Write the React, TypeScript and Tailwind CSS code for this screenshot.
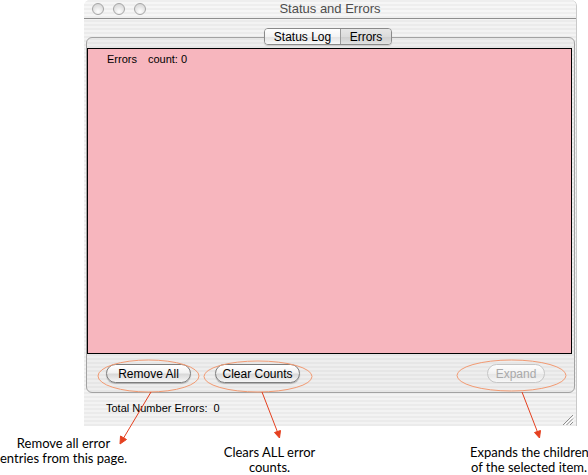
import React from 'react';

const stripes =
  'bg-[repeating-linear-gradient(180deg,#ebebeb_0px,#ebebeb_2px,#f3f3f3_2px,#f3f3f3_4px)]';

function AquaButton({ label, width, disabled }: { label: string; width: string; disabled?: boolean }) {
  return (
    <div
      className={`${width} h-[19px] rounded-full flex items-center justify-center text-[12px] leading-none ${
        disabled
          ? 'border border-[#c6c6c6] text-[#a9a9a9] bg-[linear-gradient(180deg,#fdfdfd_0%,#f1f1f1_50%,#e6e6e6_55%,#f7f7f7_100%)]'
          : 'border border-[#7d7d7d] text-black bg-[linear-gradient(180deg,#ffffff_0%,#f2f2f2_45%,#d9d9d9_55%,#f6f6f6_100%)] shadow-[0_1px_1px_rgba(0,0,0,0.25)]'
      }`}
    >
      {label}
    </div>
  );
}

export default function App() {
  return (
    <div className="relative w-[588px] h-[475px] bg-white overflow-hidden font-['Liberation_Sans',Arial,sans-serif]">
      {/* Window */}
      <div className={`ml-[84px] w-[492px] h-[426px] flex flex-col rounded-t-[6px] ${stripes} shadow-[1px_0_0_#c9c9c9]`}>
        {/* Title bar */}
        <div className="relative h-[22px] flex items-center border-b border-[#8e8e8e] rounded-t-[6px] bg-[repeating-linear-gradient(180deg,#eeeeee_0px,#eeeeee_2px,#f6f6f6_2px,#f6f6f6_4px)]">
          <div className="flex items-center gap-[9px] pl-[8px]">
            {[0, 1, 2].map((i) => (
              <div
                key={i}
                className="w-[12px] h-[12px] rounded-full border border-[#a5a5a5] bg-[radial-gradient(circle_at_50%_75%,#ffffff_0%,#e9e9e9_45%,#cfcfcf_100%)]"
              />
            ))}
          </div>
          <div className="absolute inset-0 flex items-center justify-center text-[13px] text-[#4d4d4d]">
            Status and Errors
          </div>
        </div>

        {/* Tabs */}
        <div className="relative z-10 mt-[9px] h-[17px] flex justify-center pr-[4px]">
          <div className="flex h-[17px] rounded-[4px] border border-[#8a8a8a] overflow-hidden text-[12px] leading-none shadow-[0_1px_1px_rgba(0,0,0,0.15)]">
            <div className="w-[76px] flex items-center justify-center bg-[linear-gradient(180deg,#ffffff_0%,#f4f4f4_50%,#e4e4e4_55%,#f8f8f8_100%)] border-r border-[#9a9a9a]">
              Status Log
            </div>
            <div className="w-[50px] flex items-center justify-center bg-[linear-gradient(180deg,#e6e6e6_0%,#dcdcdc_50%,#cfcfcf_55%,#e2e2e2_100%)]">
              Errors
            </div>
          </div>
        </div>

        {/* Tab box */}
        <div className="-mt-[8px] ml-[2px] mr-[1px] rounded-[6px] border border-[#a2a2a2] bg-[repeating-linear-gradient(180deg,#e6e6e6_0px,#e6e6e6_2px,#eeeeee_2px,#eeeeee_4px)] pt-[10px] pr-[2px]">
          <div className="h-[306px] border border-black bg-[#f7b6be] pl-[19px] pt-[4px] text-[11px] leading-[13px] text-black">
            <span>Errors</span>
            <span className="ml-[11px]">count: 0</span>
          </div>
          <div className="flex items-center mt-[10px] mb-[9px] pl-[19px] pr-[27px]">
            <AquaButton label="Remove All" width="w-[85px]" />
            <div className="ml-[24px]">
              <AquaButton label="Clear Counts" width="w-[85px]" />
            </div>
            <div className="ml-auto">
              <AquaButton label="Expand" width="w-[58px]" disabled />
            </div>
          </div>
        </div>

        {/* Status line */}
        <div className="mt-[9px] pl-[22px] text-[11px] leading-[13px] text-black whitespace-pre">
          Total Number Errors:  0
        </div>
        <div className="mt-auto flex justify-end pr-[2px] pb-[1px]">
          <svg width="11" height="10" viewBox="0 0 11 10">
            <path d="M10 0 L0 10 M10 3.5 L3.5 10 M10 7 L7 10" stroke="#8c8c8c" strokeWidth="1" />
            <path d="M11 1 L1 11 M11 4.5 L4.5 11" stroke="#ffffff" strokeWidth="1" />
          </svg>
        </div>
      </div>

      {/* Annotation captions */}
      <div className="flex items-start font-['Lato',sans-serif] text-[13px] leading-[15px] text-black whitespace-nowrap">
        <div className="mt-[10px] w-[127px] text-center">
          Remove all error
          <br />
          entries from this page.
        </div>
        <div className="mt-[19px] ml-[82px] w-[121px] text-center">
          Clears ALL error
          <br />
          counts.
        </div>
        <div className="mt-[19px] ml-[140px] w-[118px] text-center">
          Expands the children
          <br />
          of the selected item.
        </div>
      </div>

      {/* Callout ellipses and arrows */}
      <svg className="absolute inset-0 pointer-events-none" width="588" height="475" viewBox="0 0 588 475">
        <g fill="none" stroke="#f29a72" strokeWidth="1">
          <ellipse cx="148.5" cy="376" rx="50.5" ry="16" />
          <ellipse cx="258" cy="376.5" rx="54" ry="15.5" />
          <ellipse cx="511.5" cy="375.5" rx="54.5" ry="15.5" />
        </g>
        <g stroke="#e5401f" strokeWidth="1" fill="#e5401f">
          <line x1="151" y1="392" x2="123" y2="439" />
          <polygon points="120,444 120.5,436 126.5,439.5" />
          <line x1="262" y1="392" x2="277.5" y2="432" />
          <polygon points="279.5,438 274.5,432.5 280.5,430.5" />
          <line x1="522" y1="392" x2="537.5" y2="432" />
          <polygon points="539.5,438 534.5,432.5 540.5,430.5" />
        </g>
      </svg>
    </div>
  );
}
